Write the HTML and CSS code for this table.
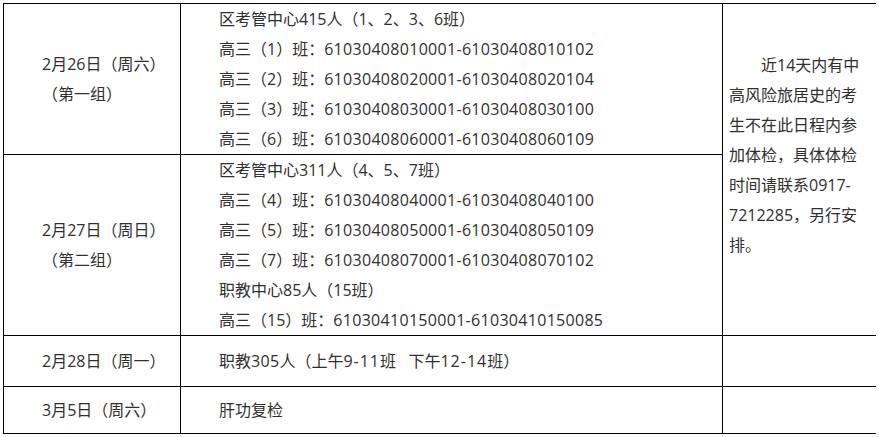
FILE: index.html
```html
<!DOCTYPE html>
<html lang="zh-CN">
<head>
<meta charset="utf-8">
<title>体检安排</title>
<link rel="stylesheet" href="styles.css">
</head>
<body>
<table class="schedule">
  <colgroup>
    <col class="c-date">
    <col class="c-detail">
    <col class="c-note">
  </colgroup>
  <tbody>
    <tr>
      <td class="date">2月26日（周六）<br>（第一组）</td>
      <td class="detail">区考管中心415人（1、2、3、6班）<br>高三（1）班：<span class="num">61030408010001-61030408010102</span><br>高三（2）班：<span class="num">61030408020001-61030408020104</span><br>高三（3）班：<span class="num">61030408030001-61030408030100</span><br>高三（6）班：<span class="num">61030408060001-61030408060109</span></td>
      <td class="note" rowspan="2"><p class="note-text">近14天内有中<br>高风险旅居史的考<br>生不在此日程内参<br>加体检，具体体检<br>时间请联系0917-<br>7212285，另行安<br>排。</p></td>
    </tr>
    <tr>
      <td class="date">2月27日（周日）<br>（第二组）</td>
      <td class="detail">区考管中心311人（4、5、7班）<br>高三（4）班：<span class="num">61030408040001-61030408040100</span><br>高三（5）班：<span class="num">61030408050001-61030408050109</span><br>高三（7）班：<span class="num">61030408070001-61030408070102</span><br>职教中心85人（15班）<br>高三（15）班：<span class="num">61030410150001-61030410150085</span></td>
    </tr>
    <tr class="row-short">
      <td class="date">2月28日（周一）</td>
      <td class="detail mid">职教<span class="num">305</span>人（上午<span class="num-wide">9-11</span>班&nbsp;&nbsp; 下午<span class="num-wide">12-14</span>班）</td>
      <td class="empty"></td>
    </tr>
    <tr class="row-last">
      <td class="date">3月5日（周六）</td>
      <td class="detail mid">肝功复检</td>
      <td class="empty"></td>
    </tr>
  </tbody>
</table>
</body>
</html>
```

FILE: styles.css
```css
html, body {
  background: #ffffff;
}

body {
  margin: 3px;
  font-family: "Open Sans", "Noto Sans CJK SC", sans-serif;
  font-size: 16px;
  line-height: 30px;
  color: #2f2f2f;
}

.schedule {
  border-collapse: collapse;
  table-layout: fixed;
  width: 874px;
}

.c-date { width: 177px; }
.c-detail { width: 542px; }
.c-note { width: 155px; }

.schedule td {
  border: 1px solid #000000;
  padding: 0;
  white-space: nowrap;
}

.date {
  vertical-align: middle;
  padding-left: 38px !important;
}

.detail {
  vertical-align: top;
  padding-left: 38px !important;
}

.detail.mid {
  vertical-align: middle;
}

.num {
  letter-spacing: 0.3px;
}

.num-wide {
  letter-spacing: 1px;
}

.note {
  vertical-align: top;
  padding: 46px 6px 0 6px !important;
}

.note-text {
  margin: 0;
  text-indent: 2em;
}

.row-short {
  height: 51px;
}

.row-last {
  height: 47px;
}
```
